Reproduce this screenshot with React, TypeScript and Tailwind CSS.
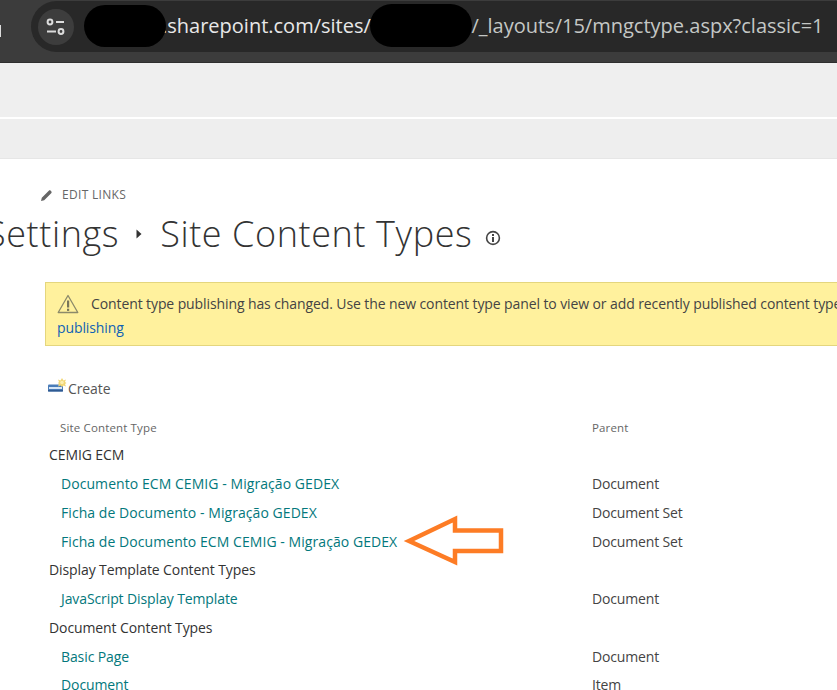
const sans = "font-['Open_Sans','Liberation_Sans',sans-serif]";

function Row({ name, parent, link, wide }: { name: string; parent: string; link?: boolean; wide?: boolean }) {
  const tracking = wide ? " tracking-[0.06px]" : " tracking-[-0.1px]";
  return (
    <div className="flex items-center h-[28.75px]">
      <div className={(link ? "w-[592px] pl-[61px] text-[#03787c] shrink-0 text-[14px]" : "w-[592px] pl-[49px] text-[#333] shrink-0 text-[14px]") + tracking}>{name}</div>
      <div className="text-[#444] text-[14px] tracking-[-0.15px]">{parent}</div>
    </div>
  );
}

function Blot({ className }: { className: string }) {
  return <div className={"absolute bg-black " + className} />;
}

export default function App() {
  return (
    <div className={"w-[837px] h-[690px] overflow-hidden bg-white " + sans}>
      <div className="h-[63px] bg-[#3c3c3c] border-b border-[#2e2e2e] pt-[1px] relative">
        <div className="absolute left-0 top-[25px] w-[1px] h-[12px] bg-[#ddd]" />
        <div className="ml-[31px] h-[51px] bg-[#282828] rounded-l-[26px] flex items-center pl-[7px] relative">
          <div className="w-[36px] h-[36px] rounded-full bg-[#3d3d3d] flex items-center justify-center shrink-0">
            <svg width="20" height="18" viewBox="0 0 20 18" fill="none" stroke="#dcdcdc" strokeWidth="2">
              <circle cx="4" cy="4" r="2.4" />
              <path d="M10 4h8" />
              <path d="M1 13.5h9" />
              <circle cx="15" cy="13.5" r="2.4" />
            </svg>
          </div>
          <div className="ml-[88px] text-[20px] text-[#e8e8e8] whitespace-nowrap leading-[28px] -mt-[2px]">
            .sharepoint.com/sites/
            <span className="text-[#c4c7c5]">c</span>
            <span className="inline-block w-[91px]" />
            <span className="text-[#c4c7c5]">/_layouts/15/mngctype.aspx?classic=1</span>
          </div>
          <Blot className="left-[53px] top-[4px] w-[82px] h-[42px] rounded-[22px]" />
          <Blot className="left-[339px] top-[3px] w-[102px] h-[43px] rounded-[24px]" />
        </div>
      </div>
      <div className="h-[54px] bg-[#efefef]" />
      <div className="h-[2px] bg-white" />
      <div className="h-[40px] bg-[#eeeeee] border-b border-[#e6e6e6]" />

      <div className="flex items-center ml-[40px] mt-[28px] h-[16px] gap-[9px]">
        <svg width="13" height="13" viewBox="0 0 13 13" fill="#666">
          <path d="M1 12l.8-3.2L8.8 1.8c.6-.6 1.3-.6 1.9 0l.5.5c.6.6.6 1.3 0 1.9L4.2 11.2z" />
        </svg>
        <span className="text-[12px] text-[#666] tracking-[0.3px]">EDIT LINKS</span>
      </div>

      <div className="flex items-center h-[50px] mt-[6px] -ml-[14px] whitespace-nowrap font-light text-[#333] text-[36px] tracking-[0.6px]">
        <span>Settings</span>
        <svg className="ml-[17px] mr-[18px]" width="6" height="10" viewBox="0 0 6 10" fill="#333">
          <path d="M0.5 0.5L5.5 5L0.5 9.5z" />
        </svg>
        <span>Site Content Types</span>
        <svg className="ml-[13px] mt-[7px]" width="16" height="16" viewBox="0 0 16 16" fill="none">
          <circle cx="8" cy="8" r="6.4" stroke="#444" strokeWidth="1.6" />
          <rect x="7" y="7" width="2" height="5" fill="#444" />
          <rect x="7" y="4" width="2" height="2" fill="#444" />
        </svg>
      </div>

      <div className="ml-[45px] mt-[23px] w-[820px] h-[64px] bg-[#fff19d] border border-[#e4d67e] pl-[11px] pt-[9px] text-[14px] tracking-[-0.1px] leading-[24px]">
        <div className="flex items-center whitespace-nowrap text-[#444]">
          <svg width="22" height="20" viewBox="0 0 22 20" fill="none">
            <path d="M11 1.5L20.8 18.5H1.2z" stroke="#8c8a6a" strokeWidth="1.3" strokeLinejoin="round" />
            <rect x="10" y="6.5" width="2.2" height="7" fill="#77755a" />
            <rect x="10" y="14.7" width="2.2" height="2.2" fill="#77755a" />
          </svg>
          <span className="ml-[12px]">Content type publishing has changed. Use the new content type panel to view or add recently published content types.</span>
        </div>
        <div className="text-[#0f62b5]">publishing</div>
      </div>

      <div className="flex items-center ml-[48px] mt-[30px] h-[24px]">
        <svg className="mb-[3px]" width="20" height="18" viewBox="0 0 20 18">
          <rect x="0" y="6.5" width="15" height="7" rx="1" fill="#4a7cb8" />
          <rect x="1" y="9" width="13" height="2" fill="#d7e6f6" />
          <rect x="0" y="12" width="15" height="1.5" fill="#2f5a92" />
          <path d="M14 0l1.5 2.5L18 1.5 17 4l1.5 1-1.5 1 1 2.5-2.5-1L14 9l-1.5-1.5-2.5 1 1-2.5-1-1 1-1-1-2.5 2.5 1z" fill="#f2d675" />
          <circle cx="14" cy="4.5" r="1.8" fill="#fbeeb0" />
        </svg>
        <span className="text-[14px] text-[#555] tracking-[-0.1px]">Create</span>
      </div>

      <div className="flex items-center mt-[18px] h-[20px] text-[11.5px] text-[#666] tracking-[0.15px]">
        <div className="w-[592px] pl-[60px] shrink-0">Site Content Type</div>
        <div>Parent</div>
      </div>

      <div className="relative mt-[2.4px]">
        <Row name="CEMIG ECM" parent="" />
        <Row link wide name="Documento ECM CEMIG - Migração GEDEX" parent="Document" />
        <Row link wide name="Ficha de Documento - Migração GEDEX" parent="Document Set" />
        <Row link wide name="Ficha de Documento ECM CEMIG - Migração GEDEX" parent="Document Set" />
        <Row name="Display Template Content Types" parent="" />
        <Row link name="JavaScript Display Template" parent="Document" />
        <Row name="Document Content Types" parent="" />
        <Row link name="Basic Page" parent="Document" />
        <Row link name="Document" parent="Item" />
        <svg className="absolute left-[400px] top-[70px]" width="110" height="60" viewBox="0 0 110 60" fill="none">
          <path d="M9 31L55 9V20.5H101V41H55V52Z" stroke="#fd7c25" strokeWidth="4.5" strokeLinejoin="miter" />
        </svg>
      </div>
    </div>
  );
}
